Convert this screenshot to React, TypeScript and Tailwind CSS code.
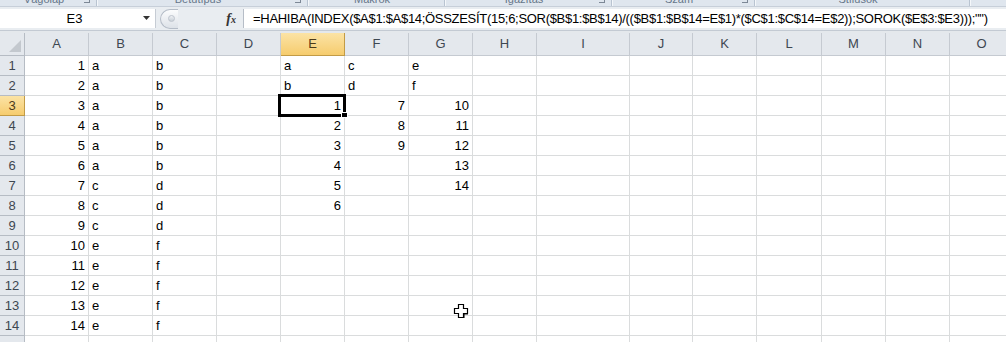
import React from 'react';

type Col = { k: string; w: string };

const COLS: Col[] = [
  { k: 'A', w: 'w-[64px]' },
  { k: 'B', w: 'w-[64px]' },
  { k: 'C', w: 'w-[64px]' },
  { k: 'D', w: 'w-[64px]' },
  { k: 'E', w: 'w-[64px]' },
  { k: 'F', w: 'w-[64px]' },
  { k: 'G', w: 'w-[64px]' },
  { k: 'H', w: 'w-[64px]' },
  { k: 'I', w: 'w-[93px]' },
  { k: 'J', w: 'w-[63px]' },
  { k: 'K', w: 'w-[64px]' },
  { k: 'L', w: 'w-[65px]' },
  { k: 'M', w: 'w-[64px]' },
  { k: 'N', w: 'w-[64px]' },
  { k: 'O', w: 'w-[64px]' },
];

// cell values: numbers are right aligned, text left aligned
const DATA: Record<string, string | number>[] = [
  { A: 1, B: 'a', C: 'b', E: 'a', F: 'c', G: 'e' },
  { A: 2, B: 'a', C: 'b', E: 'b', F: 'd', G: 'f' },
  { A: 3, B: 'a', C: 'b', E: 1, F: 7, G: 10 },
  { A: 4, B: 'a', C: 'b', E: 2, F: 8, G: 11 },
  { A: 5, B: 'a', C: 'b', E: 3, F: 9, G: 12 },
  { A: 6, B: 'a', C: 'b', E: 4, G: 13 },
  { A: 7, B: 'c', C: 'd', E: 5, G: 14 },
  { A: 8, B: 'c', C: 'd', E: 6 },
  { A: 9, B: 'c', C: 'd' },
  { A: 10, B: 'e', C: 'f' },
  { A: 11, B: 'e', C: 'f' },
  { A: 12, B: 'e', C: 'f' },
  { A: 13, B: 'e', C: 'f' },
  { A: 14, B: 'e', C: 'f' },
  {},
];

const GROUPS = [
  { label: 'Vágólap', w: 'w-[97px]', launcher: true },
  { label: 'Betűtípus', w: 'w-[211px]', launcher: true },
  { label: 'Makrók', w: 'w-[137px]', launcher: false },
  { label: 'Igazítás', w: 'w-[167px]', launcher: true },
  { label: 'Szám', w: 'w-[143px]', launcher: true },
  { label: 'Stílusok', w: 'w-[215px]', launcher: false },
];

const FORMULA =
  '=HAHIBA(INDEX($A$1:$A$14;ÖSSZESÍT(15;6;SOR($B$1:$B$14)/(($B$1:$B$14=E$1)*($C$1:$C$14=E$2));SOROK($E$3:$E3)));"")';

const font = "font-['Liberation_Sans',Arial,sans-serif]";

const App: React.FC = () => {
  return (
    <div className={`w-[1006px] h-[342px] overflow-hidden bg-white ${font} text-[13px] text-black`}>
      {/* ribbon group labels, mostly scrolled off the top */}
      <div className="h-[7px] flex overflow-hidden bg-[#dfe6ee] border-b border-[#c7cfd9]">
        {GROUPS.map((g) => (
          <div key={g.label} className={`${g.w} relative shrink-0 border-r border-[#b9c4d1] shadow-[1px_0_0_#f4f7fa]`}>
            <div className="absolute inset-x-0 -top-[9px] pr-[8px] text-center text-[11px] text-[#66768a]">{g.label}</div>
            {g.launcher && (
              <div className="absolute right-[6px] -top-[3px] w-[6px] h-[6px] border-r border-b border-[#7d8896]" />
            )}
          </div>
        ))}
        <div className="flex-1" />
      </div>

      {/* formula bar */}
      <div className="h-[24px] flex items-stretch py-[2px] bg-[#e9edf1] border-b border-[#c3cad3]">
        <div className="w-[156px] shrink-0 flex items-center bg-white border-r border-[#c6ccd4]">
          <span className="flex-1 text-center pl-[6px]">E3</span>
          <svg width="9" height="5" viewBox="0 0 9 5" className="mr-[3px]">
            <path d="M0 0 H7 L3.5 4 Z" fill="#333" />
          </svg>
        </div>
        <div className="w-[87px] shrink-0 flex items-center">
          <div className="ml-[4px] w-[18px] h-[20px] rounded-l-full border border-r-0 border-[#b4bcc7] bg-gradient-to-b from-[#fbfcfd] to-[#dde2e8] flex items-center justify-center">
            <div className="w-[7px] h-[7px] ml-[3px] rounded-full bg-gradient-to-b from-[#eef1f4] to-[#c9d0d8] border border-[#bdc4cd]" />
          </div>
          <span className="ml-auto mr-[7px] font-['Liberation_Serif',serif] italic font-bold text-[14px] text-[#333] leading-none">
            f<span className="text-[10px]">x</span>
          </span>
        </div>
        <div className="flex-1 flex items-center bg-white border-l border-[#b6bdc7] pl-[9px] whitespace-nowrap overflow-hidden tracking-[-0.3px]">
          {FORMULA}
        </div>
      </div>

      <div className="h-[2px] bg-[#e4e8ec]" />

      {/* grid */}
      <div className="relative">
        {/* column headers */}
        <div className="flex h-[23px]">
          <div className="w-[25px] shrink-0 relative bg-[#e4e8ed] border-r border-b border-[#b6bcc4]">
            <svg width="12" height="12" viewBox="0 0 12 12" className="absolute right-[3px] bottom-[3px]">
              <path d="M12 0 V12 H0 Z" fill="#c3c8ce" />
            </svg>
          </div>
          {COLS.map((c) =>
            c.k === 'E' ? (
              <div
                key={c.k}
                className={`${c.w} shrink-0 flex items-center justify-center bg-gradient-to-b from-[#fbe3a5] to-[#f6cc6d] border-r border-b border-[#c29b46] text-[#4b3a1a]`}
              >
                {c.k}
              </div>
            ) : (
              <div
                key={c.k}
                className={`${c.w} shrink-0 flex items-center justify-center bg-[#e4e8ed] border-r border-b border-[#c5cad1] text-[#3e4751]`}
              >
                {c.k}
              </div>
            )
          )}
        </div>

        {/* rows */}
        {DATA.map((row, i) => {
          const n = i + 1;
          const active = n === 3;
          return (
            <div key={n} className="flex h-[20px]">
              <div
                className={
                  active
                    ? 'w-[25px] shrink-0 flex items-center justify-center bg-gradient-to-b from-[#fbe3a5] to-[#f6cc6d] border-r border-b border-[#c29b46] text-[#4b3a1a]'
                    : 'w-[25px] shrink-0 flex items-center justify-center bg-[#e4e8ed] border-r border-b border-[#b6bcc4] text-[#3e4751]'
                }
              >
                {n <= 14 ? n : ''}
              </div>
              {COLS.map((c) => {
                const v = row[c.k];
                const num = typeof v === 'number';
                return (
                  <div
                    key={c.k}
                    className={`${c.w} shrink-0 flex items-center border-r border-b border-[#dadcdd] ${num ? 'justify-end pr-[3px]' : 'justify-start pl-[3px]'}`}
                  >
                    {v ?? ''}
                  </div>
                );
              })}
            </div>
          );
        })}

        {/* active cell E3 */}
        <div className="absolute left-[278px] top-[61px] w-[68px] h-[23px] border-[3px] border-black pointer-events-none" />
        <div className="absolute left-[341px] top-[79px] w-[7px] h-[6px] bg-black border border-white pointer-events-none" />

        {/* mouse pointer */}
        <svg width="16" height="16" viewBox="0 0 16 16" className="absolute left-[453px] top-[270px]">
          <path d="M5.5 1.5 H10.5 V5.5 H14.5 V10.5 H10.5 V14.5 H5.5 V10.5 H1.5 V5.5 H5.5 Z" fill="#fff" stroke="#000" strokeWidth="1.2" />
          <path d="M11 15 V11 H15" fill="none" stroke="#000" strokeWidth="1" />
        </svg>
      </div>
    </div>
  );
};

export default App;
